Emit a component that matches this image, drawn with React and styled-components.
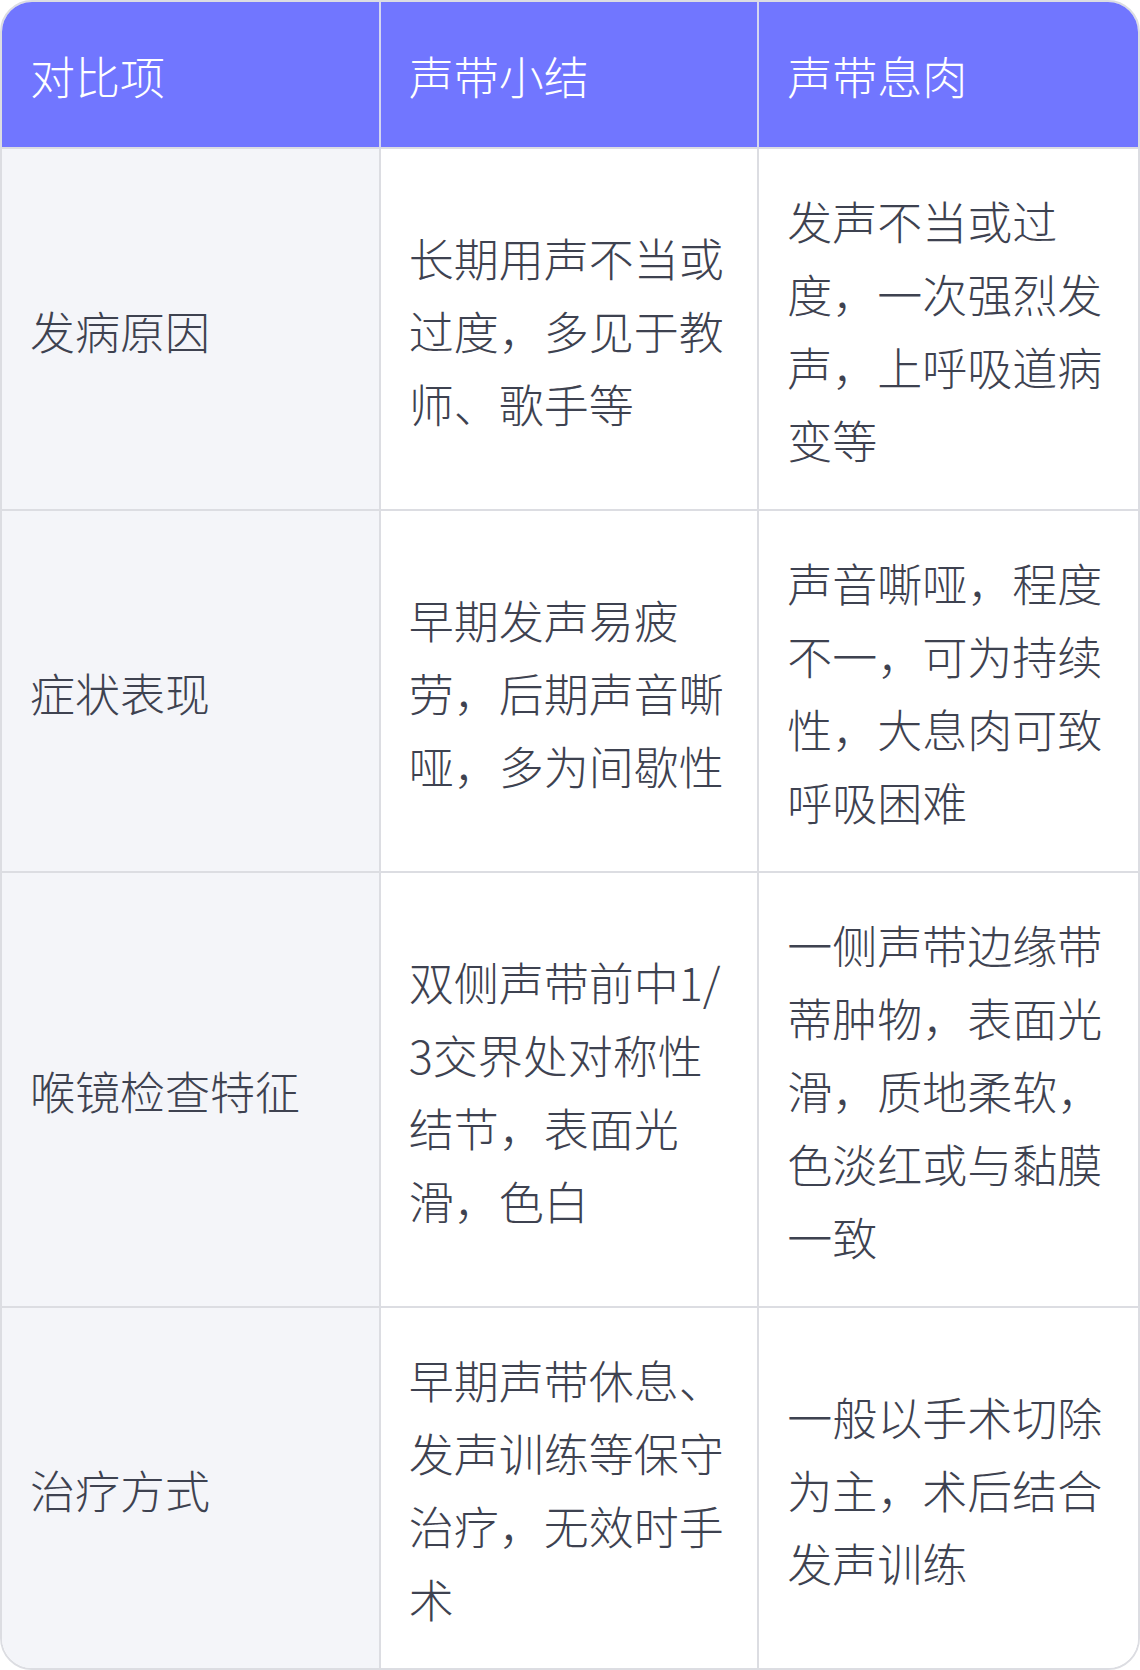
import React from 'react';
import styled, { createGlobalStyle } from 'styled-components';

const GlobalStyle = createGlobalStyle`
	html, body {
		margin: 0;
		padding: 0;
		background: #ffffff;
	}
	body {
		font-family: "Noto Sans CJK SC", "Noto Sans", sans-serif;
	}
`;

const StyledTable = styled.table`
	width: 1140px;
	table-layout: fixed;
	border-collapse: separate;
	border-spacing: 0;
	border: 2px solid #dcdde2;
	border-radius: 32px;
	overflow: hidden;
	font-size: 45px;
	font-weight: 300;
	line-height: 73px;
	color: #3e4250;
	word-break: break-all;
`;

const StyledHeadCell = styled.th`
	background: #7176ff;
	color: #ffffff;
	font-weight: 300;
	text-align: left;
	padding: 37px 28px 35px;
	border-bottom: 2px solid #dcdde2;
	border-right: 2px solid #d4d6f0;

	&:last-child {
		border-right: none;
	}
`;

const StyledCell = styled.td`
	background: ${props => props.label ? '#f4f5f9' : '#ffffff'};
	padding: 35px 28px 33px;
	vertical-align: middle;
	border-right: 2px solid #dcdde2;
	border-bottom: 2px solid #dcdde2;

	&:last-child {
		border-right: none;
	}

	tr:last-child > & {
		border-bottom: none;
	}
`;

const columns = ['对比项', '声带小结', '声带息肉'];

const rows = [
	['发病原因', '长期用声不当或过度，多见于教师、歌手等', '发声不当或过度，一次强烈发声，上呼吸道病变等'],
	['症状表现', '早期发声易疲劳，后期声音嘶哑，多为间歇性', '声音嘶哑，程度不一，可为持续性，大息肉可致呼吸困难'],
	['喉镜检查特征', '双侧声带前中1/3交界处对称性结节，表面光滑，色白', '一侧声带边缘带蒂肿物，表面光滑，质地柔软，色淡红或与黏膜一致'],
	['治疗方式', '早期声带休息、发声训练等保守治疗，无效时手术', '一般以手术切除为主，术后结合发声训练'],
];

export default function App() {
	return (
		<>
			<GlobalStyle />
			<StyledTable>
				<thead>
					<tr>
						{columns.map(col => <StyledHeadCell key={col}>{col}</StyledHeadCell>)}
					</tr>
				</thead>
				<tbody>
					{rows.map(row => (
						<tr key={row[0]}>
							{row.map((text, i) => (
								<StyledCell key={i} label={i === 0 ? 1 : 0}>{text}</StyledCell>
							))}
						</tr>
					))}
				</tbody>
			</StyledTable>
		</>
	);
}
